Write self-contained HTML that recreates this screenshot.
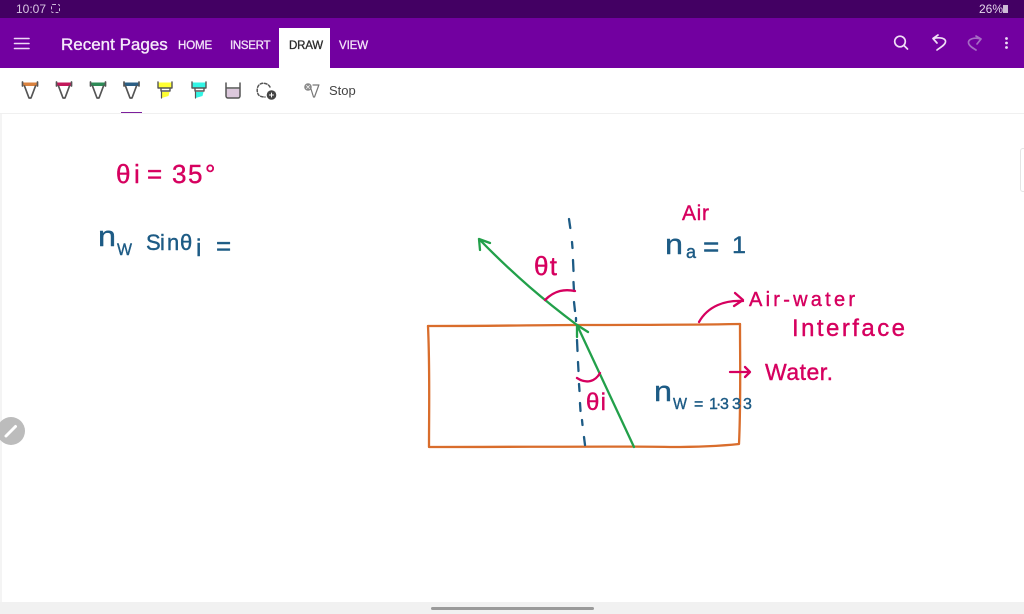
<!DOCTYPE html>
<html><head><meta charset="utf-8">
<style>
html,body{margin:0;padding:0;background:#fff}
#p{position:relative;width:1024px;height:614px;overflow:hidden;background:#fff;font-family:"Liberation Sans",sans-serif}
.a{position:absolute;white-space:nowrap}
.tab{position:absolute;top:39px;font-size:11.500px;color:#f3e3f8;line-height:14px;-webkit-text-stroke:.3px currentColor}
</style></head><body><div id="p">
<div class="a" style="left:0;top:0;width:1024px;height:18px;background:#430063"></div>
<div class="a" style="left:0;top:18px;width:1024px;height:49.500px;background:#7200a0"></div>
<div class="a" style="left:279px;top:28px;width:51px;height:40px;background:#fff"></div>
<div class="a" style="left:16px;top:2px;font-size:12px;color:#d8c6e2;line-height:15px">10:07</div>
<div class="a" style="left:51px;top:4px;width:9px;height:9px;border:1px dashed #cdb8d8;box-sizing:border-box;border-radius:2px"></div>
<div class="a" style="left:979px;top:2px;font-size:12px;color:#e4d6ea;line-height:15px">26%</div>
<div class="a" style="left:1003px;top:5px;width:5px;height:8px;background:#cdbbd6"></div>
<div class="a" style="left:61px;top:34px;font-size:17px;color:#f6eafa;line-height:21px;-webkit-text-stroke:.35px #f6eafa">Recent Pages</div>
<div class="tab" style="left:178px;letter-spacing:-.1px">HOME</div>
<div class="tab" style="left:230px;letter-spacing:-.3px">INSERT</div>
<div class="tab" style="left:289px;color:#2a2a2a;letter-spacing:-.2px">DRAW</div>
<div class="tab" style="left:339px;letter-spacing:-.1px">VIEW</div>
<div class="a" style="left:329px;top:83px;font-size:13px;color:#444;line-height:16px">Stop</div>
<div class="a" style="left:121px;top:112px;width:21px;height:2px;background:#7c1e9c"></div>
<div class="a" style="left:0;top:113px;width:1024px;height:1px;background:#f0f0f0"></div>
<div class="a" style="left:0;top:114px;width:2px;height:488px;background:#f4f4f4"></div>
<div class="a" style="left:1020px;top:148px;width:6px;height:44px;border:1px solid #e4e4e4;border-radius:4px;box-sizing:border-box;background:#fff"></div>
<div class="a" style="left:0;top:602px;width:1024px;height:12px;background:#f1f1f1"></div>
<div class="a" style="left:431px;top:606.500px;width:163px;height:3.500px;background:#9a9a9a;border-radius:2px"></div>

<svg class="a" style="left:0;top:0" width="1024" height="614" viewBox="0 0 1024 614" fill="none" stroke-linecap="round" stroke-linejoin="round">
<!-- hamburger -->
<path d="M14.500 38.500H29M14.500 43.500H29M14.500 48.500H29" stroke="#efd9f6" stroke-width="1.600"/>
<!-- app bar icons -->
<g fill="none" stroke="#f0dff6" stroke-width="1.700">
<circle cx="900" cy="41.500" r="5.300"/><path d="M904 45.500l3.500 3.500"/>
<path d="M938 35L933 38.500L937 43M933 38.500C940 37 946 38 945.500 42C945 45 941 47 937 50"/>
</g>
<path d="M976 36L981 39L977 44M981 39C974 37 968 39 968.500 43C969 46 973 48 976 50" stroke="#a66cc4" stroke-width="1.700"/>
<g fill="#f0dff6"><circle cx="1006.500" cy="38.500" r="1.400"/><circle cx="1006.500" cy="43" r="1.400"/><circle cx="1006.500" cy="47.500" r="1.400"/></g>
<!-- pens -->
<g stroke="#555" stroke-width="1.700">
<path d="M23 82.500h14.500v3.500h-14.500z" fill="#d9823f" stroke="none"/><path d="M22.500 82v4M37.500 82v4M24.500 86l4.500 12h2l4.500-12"/>
<path d="M57 82.500h14.500v3.500h-14.500z" fill="#c2185b" stroke="none"/><path d="M56.500 82v4M71.500 82v4M58.500 86l4.500 12h2l4.500-12"/>
<path d="M91 82.500h14.500v3.500h-14.500z" fill="#2e8b57" stroke="none"/><path d="M90.500 82v4M105.500 82v4M92.500 86l4.500 12h2l4.500-12"/>
<path d="M124 82.500h15v3.500h-15z" fill="#2b5f85" stroke="none"/><path d="M124 82v4M139 82v4M125.500 86l4.500 12h2l4.500-12"/>
<path d="M158 82.500h14v5.500h-14z" fill="#ffff33" stroke="none"/><path d="M158 82v6h14v-6M161 88v3h9v-3" stroke-width="1.400"/><path d="M161.500 92h8l-1 4-7 2z" fill="#ffff33" stroke="none"/><path d="M161.500 92v6" stroke-width="1.200"/>
<path d="M192 82.500h14v5.500h-14z" fill="#33f5e5" stroke="none"/><path d="M192 82v6h14v-6M195 88v3h9v-3" stroke-width="1.400"/><path d="M195.500 92h8l-1 4-7 2z" fill="#33f5e5" stroke="none"/><path d="M195.500 92v6" stroke-width="1.200"/>
<path d="M226 89h14v7a2 2 0 0 1-2 2h-10a2 2 0 0 1-2-2z" fill="#dcc8dc" stroke="none"/><path d="M226 83v13a2 2 0 0 0 2 2h10a2 2 0 0 0 2-2V83M226 88h14" stroke-width="1.500"/>
<path d="M270 87c-2-4-8-5-11-2s-2 10 1 11c2 1 4 1 5 1" stroke-dasharray="2.500 1.800" stroke-width="1.500"/>
</g>
<circle cx="271.500" cy="95" r="4.800" fill="#444"/><path d="M269.500 95h4M271.500 93v4" stroke="#fff" stroke-width="1"/>
<circle cx="308" cy="87" r="3.800" fill="#8a8a8a"/><path d="M306.500 85.500l3 3M309.500 85.500l-3 3" stroke="#fff" stroke-width=".8"/>
<path d="M311 89l2.500 8h1l4-11M313 85h6" stroke="#777" stroke-width="1.200"/>
<!-- edit button -->
<circle cx="11" cy="431" r="14" fill="#bcbcbc"/><path d="M6 436l9.500-9.500" stroke="#fff" stroke-width="3"/>

<!-- diagram -->
<path d="M428 326C500 326 540 325 577 325S680 325 740 324" stroke="#d96d2c" stroke-width="2.300"/>
<path d="M428 326C430 370 429 410 429 447C520 447 640 446 670 447C695 447 720 446 739 444C741 400 740 360 740 324" stroke="#d96d2c" stroke-width="2.300"/>
<path d="M569 219l1.300 9M572 242l.5 6M573 260l.5 11M573.500 282l.5 9M574 302l1 9M576 318v3M577 340l.5 11M578 362l.5 9M579 384l.5 7M580 403l.5 8M582 420l.5 5M584 437l1 8" stroke="#1d5b85" stroke-width="2.300"/>
<path d="M634 447L577 325M577 325L588 332M577 325L577 337" stroke="#22a04a" stroke-width="2.300"/>
<path d="M577 325C545 301 515 276 479 239M479 239L480 250M479 239L490 243" stroke="#22a04a" stroke-width="2.300"/>
<path d="M545 300C555 290 565 289 575 291" stroke="#d6005f" stroke-width="2.300"/>
<path d="M577 378C586 384 595 382 600 373" stroke="#d6005f" stroke-width="2.300"/>
<path d="M699 322C708 306 725 300 743 301M735 293L743 300L734 306" stroke="#d6005f" stroke-width="2.300"/>
<path d="M730 372H750M745 367L750 372L745 377" stroke="#d6005f" stroke-width="2.300"/>

<!-- handwriting as real text -->
<g font-family="'Liberation Sans',sans-serif" fill="#d6005f" stroke="#d6005f" stroke-width=".4" stroke-linecap="butt">
<text x="116 134 147 172 188 205" y="183" font-size="26">θi=35°</text>
<text x="682" y="220" font-size="21" textLength="27">Air</text>
<text x="534" y="275" font-size="26" textLength="23">θt</text>
<text x="586" y="410" font-size="24" textLength="20">θi</text>
<text x="749" y="306" font-size="20" textLength="106">Air-water</text>
<text x="792" y="336" font-size="24" textLength="113">Interface</text>
<text x="765" y="380" font-size="23" textLength="68">Water.</text>
</g>
<g font-family="'Liberation Sans',sans-serif" fill="#1d5b85" stroke="#1d5b85" stroke-width=".4" stroke-linecap="butt">
<text x="98" y="246" font-size="29" textLength="18" lengthAdjust="spacingAndGlyphs">n</text>
<text x="117" y="255" font-size="17" textLength="15" lengthAdjust="spacingAndGlyphs">W</text>
<text x="146 160 167 180" y="250" font-size="22">Sinθ</text>
<text x="196" y="256" font-size="24">i</text>
<text x="216" y="255" font-size="26">=</text>
<text x="665" y="254" font-size="29" textLength="18" lengthAdjust="spacingAndGlyphs">n</text>
<text x="686" y="258" font-size="18">a</text>
<text x="703" y="256" font-size="28">=</text>
<text x="732" y="253" font-size="24" textLength="14" lengthAdjust="spacingAndGlyphs">1</text>
<text x="654" y="401" font-size="29" textLength="18" lengthAdjust="spacingAndGlyphs">n</text>
<text x="673" y="409" font-size="16" textLength="14" lengthAdjust="spacingAndGlyphs">W</text>
<text x="694 709 716 720 732 743" y="409" font-size="16">=1·333</text>
</g>
</svg>
</div></body></html>
